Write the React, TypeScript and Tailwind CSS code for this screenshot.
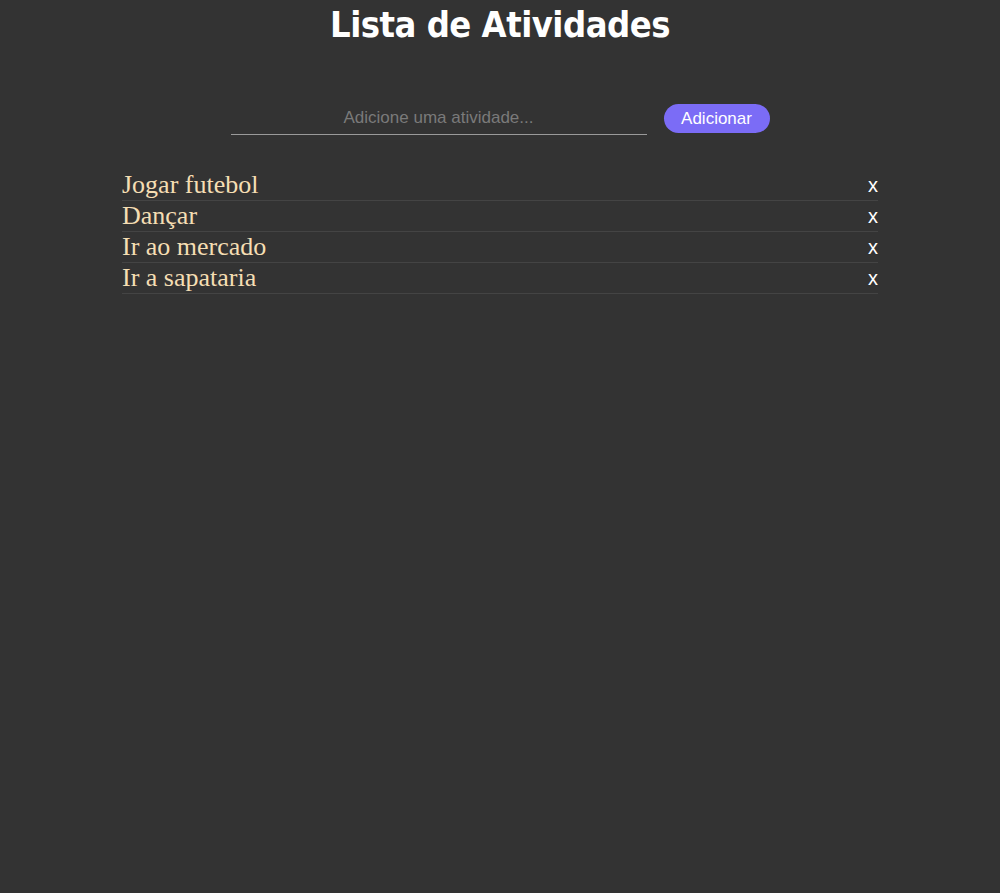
import React, { useState } from "react";

const initial = ["Jogar futebol", "Dançar", "Ir ao mercado", "Ir a sapataria"];

export default function App() {
  const [items, setItems] = useState(initial);
  const [text, setText] = useState("");

  const add = () => {
    if (!text.trim()) return;
    setItems([...items, text.trim()]);
    setText("");
  };

  return (
    <div className="min-h-[893px] bg-[#333333] font-['Liberation_Sans',Arial,sans-serif]">
      <h1 className="pt-[4px] text-center text-[36px] leading-[42px] font-bold text-white tracking-[-0.5px] font-['DejaVu_Sans_Condensed','Liberation_Sans',sans-serif]">
        Lista de Atividades
      </h1>

      <div className="mt-[56px] flex items-center justify-center gap-[17px]">
        <input
          value={text}
          onChange={(e) => setText(e.target.value)}
          placeholder="Adicione uma atividade..."
          className="w-[416px] h-[33px] bg-transparent border-b border-[#9a9a9a] text-center text-[17px] text-white placeholder:text-[#7a7a7a] outline-none"
        />
        <button
          onClick={add}
          className="h-[29px] w-[106px] rounded-full bg-[#7b6cf6] text-white text-[17px]"
        >
          Adicionar
        </button>
      </div>

      <ul className="mx-auto mt-[35px] w-[756px]">
        {items.map((item, i) => (
          <li
            key={i}
            className="flex h-[31px] items-center justify-between border-b border-[#444444]"
          >
            <span className="font-['Liberation_Serif','Times_New_Roman',serif] text-[26px] leading-[28px] text-[#f5deb3]">
              {item}
            </span>
            <button
              onClick={() => setItems(items.filter((_, j) => j !== i))}
              className="text-white text-[20px] leading-none"
            >
              x
            </button>
          </li>
        ))}
      </ul>
    </div>
  );
}
